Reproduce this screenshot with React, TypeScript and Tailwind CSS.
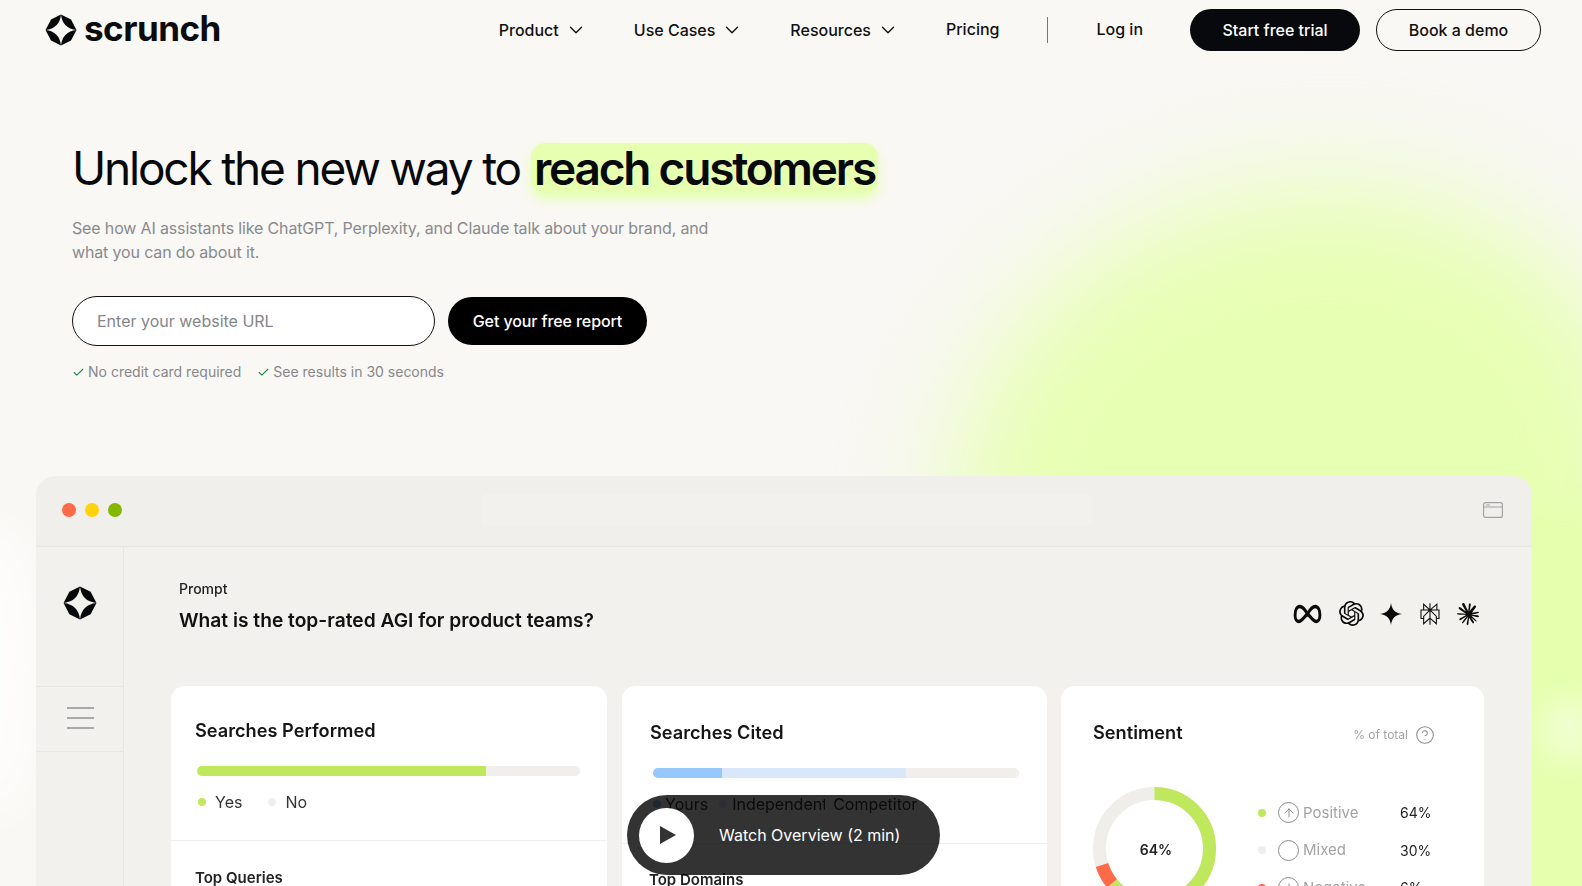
import { Check, ChevronDown, ArrowUp, ArrowDown, CircleHelp } from 'lucide-react';
import { SiOpenai, SiPerplexity, SiClaude } from 'react-icons/si';

function Logo({ className }: { className: string }) {
  return (
    <svg viewBox="0 0 32 32" className={className} fill="#08090b">
      <path d="M16 0.5 L26 5.5 L31.5 16 Q17.5 14.5 16 0.5Z" />
      <path d="M31.5 16 L26 26.5 L16 31.5 Q17.5 17.5 31.5 16Z" />
      <path d="M16 31.5 L6 26.5 L0.5 16 Q14.5 17.5 16 31.5Z" />
      <path d="M0.5 16 L6 5.5 L16 0.5 Q14.5 14.5 0.5 16Z" />
    </svg>
  );
}

function NavItem({ label }: { label: string }) {
  return (
    <span className="flex items-center gap-[6px] text-[16px] font-medium text-[#111]">
      {label}
      <ChevronDown className="w-[22px] h-[22px]" strokeWidth={1.5} />
    </span>
  );
}

function Note({ label }: { label: string }) {
  return (
    <span className="flex items-center gap-[3px]">
      <Check className="w-[13px] h-[13px] text-[#1f8a4c]" strokeWidth={2} />
      {label}
    </span>
  );
}

function Dot({ color }: { color: string }) {
  return <span className={`w-[8px] h-[8px] rounded-full ${color}`} />;
}

function SentimentRow({ dot, name, value, icon }: { dot: string; name: string; value: string; icon?: React.ReactNode }) {
  return (
    <div className="flex items-center h-[37.500px]">
      <Dot color={dot} />
      <span className="ml-[12px] w-[21px] h-[21px] rounded-full border border-[#8c8c8c] flex items-center justify-center text-[#666]">{icon}</span>
      <span className="ml-[4px] w-[97px] text-[15px] text-[#a3a3a3]">{name}</span>
      <span className="text-[14px] text-[#222]">{value}</span>
    </div>
  );
}

export default function App() {
  return (
    <div className="relative h-screen overflow-hidden bg-[#f9f8f4] font-['Inter',sans-serif]">
      {/* green glow behind the hero */}
      <div className="absolute left-[950px] top-[190px] w-[700px] h-[600px] -rotate-[15deg] rounded-[50%] bg-[#e7ffb3] blur-[55px]" />
      <div className="absolute left-[1480px] top-[500px] w-[200px] h-[500px] bg-[#e5ffae] blur-[20px]" />
      <div className="absolute left-[1545px] top-[700px] w-[50px] h-[60px] bg-[#f0ffd0] blur-[14px]" />
      <div className="absolute -left-[60px] top-[520px] w-[100px] h-[300px] rounded-[50%] bg-white/70 blur-[25px]" />

      <div className="relative">
        <header className="flex items-center h-[60px] pl-[45px] pr-[41px]">
          <div className="flex items-center gap-[7px]">
            <Logo className="w-[32px] h-[32px]" />
            <span className="text-[35px] leading-none font-bold tracking-[-0.5px] text-[#0b0c0e] -mt-[3px]">scrunch</span>
          </div>
          <nav className="ml-auto flex items-center">
            <NavItem label="Product" />
            <span className="ml-[47px]"><NavItem label="Use Cases" /></span>
            <span className="ml-[47px]"><NavItem label="Resources" /></span>
            <span className="ml-[47px] -mt-[2px] text-[16px] font-medium text-[#111]">Pricing</span>
            <span className="ml-[48px] w-px h-[26px] bg-[#777]" />
            <span className="ml-[48px] -mt-[2px] text-[16px] font-medium text-[#111]">Log in</span>
            <button className="ml-[47px] w-[170px] h-[42px] rounded-full bg-[#07090c] text-white text-[16px] font-medium">Start free trial</button>
            <button className="ml-[16px] w-[165px] h-[42px] rounded-full border border-[#111] text-[#111] text-[16px] font-medium">Book a demo</button>
          </nav>
        </header>

        <section className="pl-[72px] pt-[82px]">
          <h1 className="flex items-baseline h-[52px] text-[46px] leading-[52px] tracking-[-2.2px] text-[#07090c]">
            Unlock the new way to
            <span className="ml-[11px] px-[3px] leading-[50px] rounded-[14px] bg-[#e6ffb0] font-semibold shadow-[0_6px_12px_#e6ffb0]">reach customers</span>
          </h1>
          <p className="mt-[22px] w-[660px] text-[16px] leading-[24px] tracking-[-0.15px] text-[#8a8a8e]">
            See how AI assistants like ChatGPT, Perplexity, and Claude talk about your brand, and what you can do about it.
          </p>
          <div className="mt-[32px] flex items-center gap-[13px]">
            <input
              placeholder="Enter your website URL"
              className="w-[363px] h-[50px] rounded-full border border-[#111] bg-white px-[24px] text-[16px] outline-none placeholder:text-[#85858a]"
            />
            <button className="w-[199px] h-[48px] rounded-full bg-black text-white text-[16px] font-medium tracking-[-0.1px]">Get your free report</button>
          </div>
          <div className="mt-[16px] flex items-center gap-[16px] text-[14px] leading-[20px] text-[#87878b]">
            <Note label="No credit card required" />
            <Note label="See results in 30 seconds" />
          </div>
        </section>

        <section className="mt-[94px] ml-[36px] w-[1496px] rounded-t-[20px] bg-[#f2f1ed] blur-[0.4px]">
          <div className="relative flex items-center h-[71px] rounded-t-[20px] bg-[#f0efeb] border-b border-[#e8e7df] pl-[26px] pr-[29px] pb-[2px]">
            <span className="w-[14px] h-[14px] rounded-full bg-[#ff6a48]" />
            <span className="ml-[9px] w-[14px] h-[14px] rounded-full bg-[#ffd20a]" />
            <span className="ml-[9px] w-[14px] h-[14px] rounded-full bg-[#84b800]" />
            <span className="ml-[360px] w-[610px] h-[32px] rounded-[4px] bg-[#f2f1ed]" />
            <svg viewBox="0 0 20 16" className="ml-auto w-[20px] h-[16px]" fill="none" stroke="#a3a3a3" strokeWidth="1.2">
              <rect x="0.6" y="0.6" width="18.8" height="14.8" rx="2" />
              <path d="M0.6 5h18.8M3 3h4" />
            </svg>
          </div>

          <div className="flex">
            <aside className="w-[88px] shrink-0 border-r border-[#e8e7df]">
              <div className="h-[139px] flex justify-center pt-[39px] pl-[1px]">
                <Logo className="w-[34px] h-[34px]" />
              </div>
              <div className="h-[66px] border-y border-[#e8e7df] flex flex-col items-center justify-center gap-[8px] pb-[2px] pl-[2px]">
                <span className="w-[27px] h-[2px] bg-[#a8a8a8]" />
                <span className="w-[27px] h-[2px] bg-[#a8a8a8]" />
                <span className="w-[27px] h-[2px] bg-[#a8a8a8]" />
              </div>
            </aside>

            <div className="pl-[47px]">
              <div className="flex items-start pl-[8px] pt-[32px] h-[139px]">
                <div>
                  <div className="text-[14px] leading-[20px] font-medium text-[#222]">Prompt</div>
                  <div className="mt-[7px] text-[19.2px] leading-[28px] font-semibold text-[#111]">What is the top-rated AGI for product teams?</div>
                </div>
                <div className="ml-[699px] mt-[22px] flex items-center text-[#0b0b0b]">
                  <svg viewBox="0 0 28 16" preserveAspectRatio="none" className="w-[29px] h-[20px]" fill="none" stroke="currentColor" strokeWidth="2.8" strokeLinejoin="round">
                    <path d="M14 8C11 3.500 9 2 6.500 2 3.500 2 2 5.500 2 9c0 3 1.500 5 3.500 5 3 0 5.500-4 8.500-6 3 2 5.500 6 8.500 6 2 0 3.500-2 3.500-5 0-3.500-1.500-7-4.500-7-2.500 0-4.500 1.500-7.500 6z" />
                  </svg>
                  <SiOpenai className="ml-[17px] w-[25px] h-[25px]" />
                  <svg viewBox="0 0 24 24" className="ml-[16px] w-[22px] h-[22px]" fill="currentColor">
                    <path d="M12 0c1 7 4 11 12 12-8 1-11 5-12 12-1-7-4-11-12-12 8-1 11-5 12-12z" />
                  </svg>
                  <SiPerplexity className="ml-[17px] w-[22px] h-[24px]" />
                  <SiClaude className="ml-[16px] w-[22px] h-[22px]" />
                </div>
              </div>

              <div className="flex">
                <div className="w-[436px] h-[400px] rounded-t-[14px] bg-white">
                  <div className="h-[155px] border-b border-[#f0efeb] pl-[24px] pr-[28px] pt-[30px]">
                    <h3 className="text-[18.2px] leading-[28px] font-semibold text-[#151515]">Searches Performed</h3>
                    <div className="mt-[22px] ml-[2px] h-[10px] w-[383px] rounded-full overflow-hidden bg-[#f0efeb]">
                      <div className="h-full w-[289px] bg-[#bfe85c]" />
                    </div>
                    <div className="mt-[14px] ml-[3px] flex items-center text-[16px] leading-[24px] text-[#333]">
                      <Dot color="bg-[#bfe85c]" />
                      <span className="ml-[9px]">Yes</span>
                      <span className="ml-[26px]"><Dot color="bg-[#efeeea] block" /></span>
                      <span className="ml-[9px]">No</span>
                    </div>
                  </div>
                  <div className="pl-[24px] pt-[26px] text-[15px] leading-[22px] font-semibold text-[#222]">Top Queries</div>
                </div>

                <div className="ml-[15px] w-[425px] h-[400px] rounded-t-[14px] bg-white">
                  <div className="h-[158px] border-b border-[#f0efeb] pl-[28px] pt-[32px]">
                    <h3 className="text-[18.2px] leading-[28px] font-semibold text-[#151515]">Searches Cited</h3>
                    <div className="mt-[22px] ml-[3px] flex h-[10px] w-[366px] rounded-full overflow-hidden bg-[#f0efeb]">
                      <div className="h-full w-[69px] bg-[#96c8fb]" />
                      <div className="h-full w-[184px] bg-[#d9e7fb]" />
                    </div>
                    <div className="mt-[14px] ml-[3px] flex items-center text-[16px] leading-[24px] text-[#333]">
                      <Dot color="bg-[#96c8fb]" />
                      <span className="ml-[4px]">Yours</span>
                      <span className="ml-[11px]"><Dot color="bg-[#d9e7fb] block" /></span>
                      <span className="ml-[5px] w-[93px] overflow-hidden">Independent</span>
                      <span className="ml-[8px]">Competitor</span>
                    </div>
                  </div>
                  <div className="pl-[27px] pt-[25px] text-[15px] leading-[22px] font-semibold text-[#222]">Top Domains</div>
                </div>

                <div className="ml-[14px] w-[423px] h-[400px] rounded-t-[14px] bg-white pl-[32px] pr-[49px] pt-[32px]">
                  <div className="flex items-center">
                    <h3 className="text-[18.2px] leading-[28px] font-semibold text-[#151515]">Sentiment</h3>
                    <span className="ml-auto mt-[5px] text-[12px] text-[#a3a3a3]">% of total</span>
                    <CircleHelp className="ml-[7px] mt-[5px] w-[20px] h-[20px] text-[#8c8c8c]" strokeWidth={1.25} />
                  </div>
                  <div className="mt-[41px] flex items-start">
                    <div className="relative w-[123px] h-[123px] shrink-0">
                      <svg viewBox="0 0 123 123" className="w-full h-full -rotate-90" fill="none" strokeWidth="13">
                        <circle cx="61.5" cy="61.5" r="55" stroke="#efeeea" />
                        <circle cx="61.5" cy="61.5" r="55" stroke="#bfe85c" strokeDasharray="221 346" />
                        <circle cx="61.5" cy="61.5" r="55" stroke="#ff6a48" strokeDasharray="21 346" strokeDashoffset="-221" />
                      </svg>
                      <span className="absolute inset-0 flex items-center justify-center pl-[3px] pt-[2px] text-[14px] font-semibold text-[#222]">64%</span>
                    </div>
                    <div className="ml-[42px] w-[180px] mt-[7px]">
                      <SentimentRow dot="bg-[#bfe85c]" name="Positive" value="64%" icon={<ArrowUp className="w-[14px] h-[14px]" strokeWidth={1.25} />} />
                      <SentimentRow dot="bg-[#efeeea]" name="Mixed" value="30%" />
                      <SentimentRow dot="bg-[#ff6a48]" name="Negative" value="6%" icon={<ArrowDown className="w-[14px] h-[14px]" strokeWidth={1.25} />} />
                    </div>
                  </div>
                </div>
              </div>
            </div>
          </div>
        </section>
      </div>

      {/* video pill over the dashboard */}
      <div className="absolute left-[627px] top-[795px] w-[313px] h-[80px] rounded-full bg-black/80 flex items-center pl-[12px]">
        <span className="w-[55px] h-[55px] rounded-full bg-white flex items-center justify-center">
          <svg viewBox="0 0 16 18" className="ml-[3px] w-[16px] h-[18px]" fill="#333">
            <path d="M0 0 L16 9 L0 18Z" />
          </svg>
        </span>
        <span className="ml-[25px] text-[16px] text-white">Watch Overview (2 min)</span>
      </div>
    </div>
  );
}
